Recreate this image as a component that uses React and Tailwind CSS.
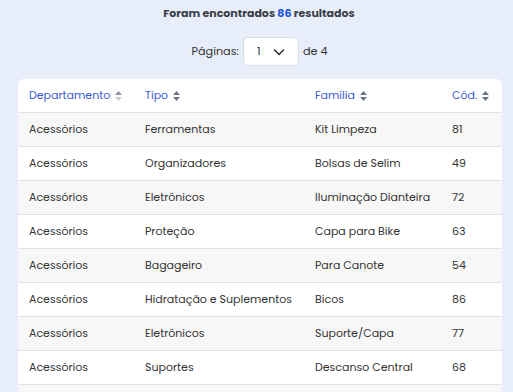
import React from "react";

const rows = [
  ["Acessórios", "Ferramentas", "Kit Limpeza", "81"],
  ["Acessórios", "Organizadores", "Bolsas de Selim", "49"],
  ["Acessórios", "Eletrônicos", "Iluminação Dianteira", "72"],
  ["Acessórios", "Proteção", "Capa para Bike", "63"],
  ["Acessórios", "Bagageiro", "Para Canote", "54"],
  ["Acessórios", "Hidratação e Suplementos", "Bicos", "86"],
  ["Acessórios", "Eletrônicos", "Suporte/Capa", "77"],
  ["Acessórios", "Suportes", "Descanso Central", "68"],
  ["", "", "", ""],
];

function Sort({ active }) {
  return (
    <svg width="9" height="12" viewBox="0 0 9 12" className="ml-[4px]">
      <path d="M4.5 1 L8 5 L1 5 Z" fill={active ? "#8c95a3" : "#6b7786"} />
      <path d="M4.5 11 L8 7 L1 7 Z" fill={active ? "#c9ced6" : "#6b7786"} />
    </svg>
  );
}

export default function App() {
  const cols = "grid grid-cols-[116px_170px_137px_1fr]";
  return (
    <div className="w-[513px] h-[392px] overflow-hidden bg-[#e8eef9] text-[#333] font-['Poppins','Inter',sans-serif]">
      <div className="pt-[5px] pl-[5px] text-center text-[11px] font-bold text-[#3a3f47] leading-[16px]">
        Foram encontrados <span className="text-[#1f56d8]">86</span> resultados
      </div>
      <div className="mt-[16px] pl-[6px] flex items-center justify-center text-[11.2px] text-[#333]">
        <span>Páginas:</span>
        <div className="ml-[4px] w-[56px] h-[29px] bg-white rounded-[5px] border border-[#d9dee8] flex items-center pl-[13px] pr-[8px] justify-between">
          <span>1</span>
          <svg width="14" height="14" viewBox="0 0 14 14" className="mr-[4px]">
            <path d="M2.5 5 L7 9.5 L11.5 5" fill="none" stroke="#333" strokeWidth="1.6" strokeLinecap="round" strokeLinejoin="round" />
          </svg>
        </div>
        <span className="ml-[4px]">de 4</span>
      </div>
      <div className="mt-[13px] ml-[18px] w-[484px] bg-white rounded-t-[6px] overflow-hidden text-[11px]">
        <div className={`${cols} h-[34px] items-center text-[#3b5bd9] border-b border-[#e2e2e2]`}>
          {["Departamento", "Tipo", "Família", "Cód."].map((h, i) => (
            <div key={h} className="pl-[11px] flex items-center">
              <span>{h}</span>
              <Sort active={i === 0} />
            </div>
          ))}
        </div>
        {rows.map((r, i) => (
          <div
            key={i}
            className={`${cols} h-[34px] items-center border-b border-[#e2e2e2] ${i % 2 === 0 ? "bg-[#f7f7f7]" : "bg-white"}`}
          >
            {r.map((c, j) => (
              <div key={j} className="pl-[11px] whitespace-nowrap">{c}</div>
            ))}
          </div>
        ))}
      </div>
    </div>
  );
}
